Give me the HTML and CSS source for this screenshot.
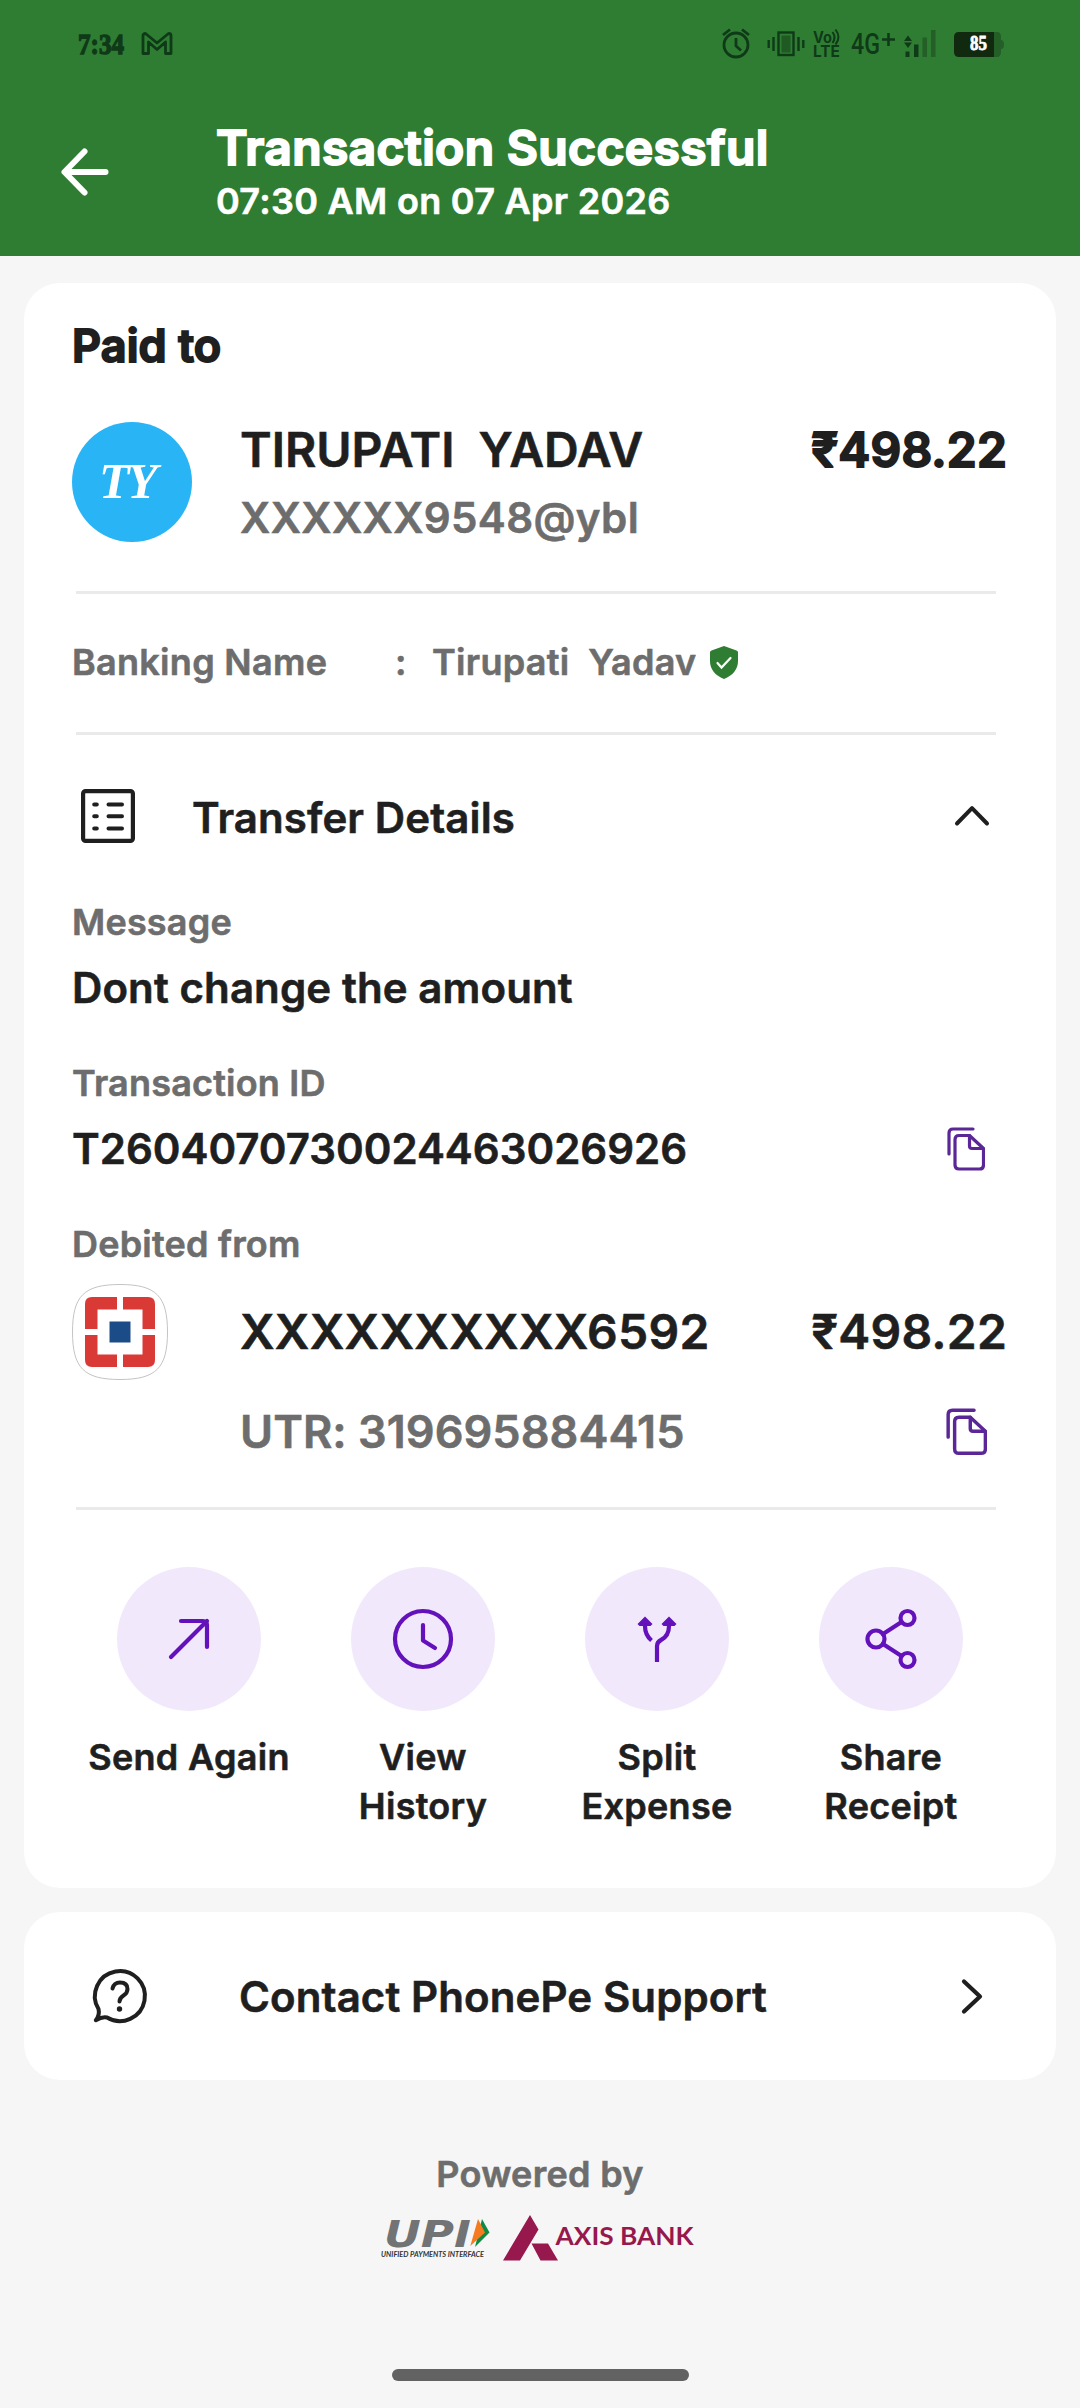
FILE: index.html
```html
<!DOCTYPE html>
<html lang="en">
<head>
<meta charset="utf-8">
<title>Transaction Successful</title>
<link rel="stylesheet" href="styles.css">
</head>
<body>
<svg class="defs" width="0" height="0" aria-hidden="true">
  <symbol id="copy" viewBox="0 0 38 44">
    <g fill="none" stroke="#5b2796" stroke-width="3.200" stroke-linecap="round" stroke-linejoin="round">
      <path d="M2 27V6q0-4 4-4h20"/>
      <path d="M22.500 8.500H12q-4 0-4 4v25.500q0 4 4 4h20.500q4 0 4-4V21.500z"/>
      <path d="M22.500 8.500V19q0 2.500 2.500 2.500h11"/>
    </g>
  </symbol>
</svg>

<header class="header">
  <div class="status">
    <div class="status-left">
      <svg class="time" width="48" height="36"><text x="0" y="27.500" textLength="46" lengthAdjust="spacingAndGlyphs">7:34</text></svg>
      <svg width="32" height="36" viewBox="0 0 32 36" fill="none" stroke="#0f3a18" stroke-width="2.800" stroke-linejoin="round"><path d="M2 27.500V9.500q0-2 2.500-2L16 17 27.500 7.500q2.500 0 2.500 2V27.500h-5.500V16L16 23.500 7.500 16V27.500z"/></svg>
    </div>
    <div class="status-right">
      <svg class="alarm" width="28" height="36" viewBox="0 0 28 36" fill="none" stroke="#0f3a18" stroke-width="2.800"><circle cx="14" cy="19" r="12"/><path d="M14 12v8l5 4.500M1 9l7-5.500M27 9l-7-5.500"/></svg>
      <svg class="vibrate" width="38" height="36" viewBox="0 0 38 36" fill="none" stroke="#0f3a18" stroke-width="2.400"><rect x="11.500" y="6.500" width="15" height="22.500"/><path fill="#1f5a22" stroke="none" d="M14.500 9.500h9v17h-9z"/><path d="M6.500 11v14M1.700 14v8M31.500 11v14M36.300 14v8"/></svg>
      <svg class="volte" width="28" height="36" viewBox="0 0 28 36"><text x="0" y="16.500" textLength="19" lengthAdjust="spacingAndGlyphs">Vo</text><text x="0" y="31" textLength="27" lengthAdjust="spacingAndGlyphs">LTE</text><path d="M19.500 6q4 5.500 0 11M22.500 3.500q6 8 0 15" fill="none" stroke="#0f3a18" stroke-width="2"/></svg>
      <svg class="net" width="46" height="36" viewBox="0 0 46 36"><text x="0" y="27.500" textLength="29" lengthAdjust="spacingAndGlyphs">4G</text><path d="M31 13.500h13M37.500 7v13" stroke="#0f3a18" stroke-width="2.600"/></svg>
      <svg class="signal" width="32" height="36" viewBox="0 0 32 36" fill="#0f3a18"><path d="M0 15l4-5.500L8 15zM0 16.500l4 5.500 4-5.500zM1.500 25.500h4V31h-4zM10 18.500h4.500V31H10z"/><path fill="#235f26" d="M18.500 11.500H23V31h-4.500zM27 4h4.500v27H27z"/></svg>
      <svg class="battery" width="50" height="36" viewBox="0 0 50 36"><path fill="#235f26" d="M40 6h3q4 0 4 5v3q3 0 3 4.500T47 23v3q0 5-4 5h-3z"/><path fill="#10290f" d="M5 6h35v25H5q-5 0-5-5V11q0-5 5-5z"/><text x="16" y="24" textLength="17" lengthAdjust="spacingAndGlyphs">85</text></svg>
    </div>
  </div>
  <div class="titlebar">
    <svg class="back" width="48" height="48" viewBox="0 0 48 48" fill="none" stroke="#fff" stroke-width="6" stroke-linecap="round" stroke-linejoin="round"><path d="M23.500 3.500L3.500 24l20 20.500M4.500 24H44.500"/></svg>
    <div>
      <h1 class="title faux">Transaction Successful</h1>
      <p class="subtitle">07:30 AM on 07 Apr 2026</p>
    </div>
  </div>
</header>

<main>
  <section class="card">
    <h2 class="paid faux">Paid to</h2>
    <div class="payee">
      <div class="avatar"><svg width="120" height="120" viewBox="0 0 120 120"><text x="27" y="76">T</text><text x="55" y="76">Y</text></svg></div>
      <div class="payee-info">
        <div class="big">TIRUPATI  YADAV</div>
        <div class="vpa">XXXXXX9548@ybl</div>
      </div>
      <div class="big amount faux">₹498.22</div>
    </div>
    <div class="rule rule-a"></div>
    <div class="banking">
      <span class="bk-label">Banking Name</span><span class="bk-colon">:</span><span>Tirupati  Yadav</span>
      <svg class="shield" width="28" height="33" viewBox="0 0 28 33"><path fill="#2e7d32" d="M14 0L26.500 4.500Q28 5 28 6.500V15c0 8-5 14.500-14 18C5 29.500 0 23 0 15V6.500Q0 5 1.500 4.500z"/><path d="M7.500 17l4 4.500 9-9.500" fill="none" stroke="#fff" stroke-width="2.200" stroke-linecap="round"/></svg>
    </div>
    <div class="rule"></div>

    <div class="details-head">
      <svg width="54" height="54" viewBox="0 0 54 54" fill="none" stroke="#1f1f1f" stroke-width="4.200"><rect x="2.100" y="2.100" width="49.800" height="49.800" rx="2.500"/><path stroke-width="4" stroke-linecap="round" d="M13.200 15.500h2.600M27.500 15.500h13.500M13.200 27.300h2.600M27.500 27.300h13.500M13.200 39.500h2.600M27.500 39.500h13.500"/></svg>
      <h3 class="mid">Transfer Details</h3>
      <svg class="up" width="36" height="22" viewBox="0 0 36 22" fill="none" stroke="#1f1f1f" stroke-width="4" stroke-linecap="round" stroke-linejoin="round"><path d="M3 18.500L18 3.200l15 15.300"/></svg>
    </div>
    <div class="label first">Message</div>
    <div class="value mid">Dont change the amount</div>
    <div class="label">Transaction ID</div>
    <div class="value mid txn"><span>T2604070730024463026926</span><svg class="copy" width="38" height="44"><use href="#copy"/></svg></div>
    <div class="label">Debited from</div>
    <div class="account">
      <svg class="bank" width="96" height="96" viewBox="0 0 96 96"><path fill="#fff" stroke="#c4c4c4" d="M48 .5C84 .5 95.500 12 95.500 48S84 95.500 48 95.500 .5 84 .5 48 12 .5 48 .5z"/><path fill="#da3a36" d="M20 13h25v12.500H25.500V45H13V20q0-7 7-7zM51 13h25q7 0 7 7v25H70.500V25.500H51zM13 51h12.500v19.500H45V83H20q-7 0-7-7zM70.500 51H83v25q0 7-7 7H51V70.500h19.500z"/><path fill="#1c4c88" d="M37.500 37.500h21v21h-21z"/></svg>
      <span class="big acct">XXXXXXXXXX6592</span>
      <span class="big amount">₹498.22</span>
    </div>
    <div class="utr"><span>UTR: 319695884415</span><svg class="copy-lg" width="41" height="47.500" viewBox="0 0 38 44"><use href="#copy"/></svg></div>
    <div class="rule"></div>

    <div class="actions">
      <div class="action"><span class="circle"><svg width="144" height="144" viewBox="0 0 144 144"><path d="M54 90L90 54M64 54h22q4 0 4 4v22"/></svg></span><span>Send Again</span></div>
      <div class="action"><span class="circle"><svg width="144" height="144" viewBox="0 0 144 144"><circle cx="72" cy="72" r="28"/><path d="M72 58v15.500l12 7.500"/></svg></span><span>View<br>History</span></div>
      <div class="action"><span class="circle"><svg width="144" height="144" viewBox="0 0 144 144"><path stroke-linecap="butt" d="M72 95V79q0-4 4-6 8-4 8-14v-3M60 56v3q0 9 6.500 14.500"/><path fill="#6311bb" stroke="none" d="M60 49.500l7.500 7.500-2 2H54.500l-2-2zM84 49.500l7.500 7.500-2 2H78.500l-2-2z"/></svg></span><span>Split<br>Expense</span></div>
      <div class="action"><span class="circle"><svg width="144" height="144" viewBox="0 0 144 144"><circle cx="57" cy="72" r="8.500"/><circle cx="88.500" cy="51" r="7"/><circle cx="88.500" cy="93" r="7"/><path d="M64 67l18.500-12M64 77l18.500 12"/></svg></span><span>Share<br>Receipt</span></div>
    </div>
  </section>

  <section class="card support">
    <svg width="54" height="54" viewBox="0 0 54 54" fill="none" stroke="#1f1f1f" stroke-width="4" stroke-linecap="round" stroke-linejoin="round"><path d="M2.800 51.200Q7 46 5.500 40A25 25 0 1 1 14 48.500Q9 47.500 2.800 51.200z"/><path d="M19.500 19.500q1.500-6 7.500-6 7.500 0 7.500 6.500 0 4-4 6.500-4 2.500-4 6"/><circle cx="26.500" cy="40" r="2.700" fill="#1f1f1f" stroke="none"/></svg>
    <span class="mid">Contact PhonePe Support</span>
    <svg class="next" width="22" height="35" viewBox="0 0 22 35" fill="none" stroke="#1f1f1f" stroke-width="4.200" stroke-linecap="round" stroke-linejoin="round"><path d="M3 2.500l16 15L3 32.500"/></svg>
  </section>

  <footer class="footer">
    <div class="powered">Powered by</div>
    <div class="logos">
      <svg class="upi" width="110" height="46" viewBox="0 0 110 46">
        <text class="upi-name" x="3" y="32" textLength="87" lengthAdjust="spacingAndGlyphs">UPI</text>
        <text class="upi-tag" x="0" y="42" textLength="103" lengthAdjust="spacingAndGlyphs">UNIFIED PAYMENTS INTERFACE</text>
        <path fill="#0f8a43" d="M101 4l7.500 13.500L94 32z"/><path fill="#f47b20" d="M97 4l7 13.500L89.300 31z"/>
      </svg>
      <svg class="axis" width="194" height="46" viewBox="0 0 194 46">
        <path fill="#97184d" d="M27 0l8.500 14.500L17 45.500H0zM28.500 28.500H45L55 45.500H37.500z"/>
        <text x="52.500" y="29.500" textLength="138" lengthAdjust="spacingAndGlyphs">AXIS BANK</text>
      </svg>
    </div>
  </footer>
</main>
<div class="homebar"></div>
</body>
</html>
```
FILE: styles.css
```css
* { box-sizing: border-box; margin: 0; padding: 0; }

body {
  width: 1080px;
  height: 2408px;
  overflow: hidden;
  display: flex;
  flex-direction: column;
  background: #f6f6f6;
  color: #1f1f1f;
  font: 600 36px/44px Inter, Roboto, sans-serif;
  letter-spacing: .3px;
  -webkit-text-stroke: .6px currentColor;
}

svg { display: block; flex: none; overflow: visible; -webkit-text-stroke: 0; }
.defs { position: absolute; }

/* Heavier cut used for headings and the main amount */
.faux { -webkit-text-stroke: 2px currentColor; }

/* Header */
.header { height: 256px; flex: none; background: #2f7d32; color: #fff; }
.status {
  height: 120px;
  padding: 26px 76px 0 78px;
  display: flex;
  justify-content: space-between;
  align-items: flex-start;
}
.status-left { display: flex; gap: 15px; }
.status-right { display: flex; }
.status svg text { fill: #0f3a18; }
.status .time text { font: 700 30px "Liberation Serif", serif; letter-spacing: 0; stroke: #0f3a18; stroke-width: 1.4px; }
.vibrate { margin-left: 17px; }
.volte { margin-left: 8px; }
.status .volte text { font: 700 15.500px Inter, sans-serif; letter-spacing: 0; }
.net { margin-left: 10px; }
.status .net text { font: 500 29px Roboto, sans-serif; letter-spacing: 0; }
.signal { margin-left: 7px; }
.battery { margin-left: 18px; }
.status .battery text { fill: #fff; font: 700 22px "Liberation Serif", serif; letter-spacing: 0; stroke: #fff; stroke-width: .8px; }

.titlebar { display: flex; align-items: flex-start; padding-left: 61px; }
.back { margin: 28px 107px 0 0; }
.title { font-size: 48px; font-weight: 600; line-height: 56px; letter-spacing: .35px; }
.subtitle { margin-top: 3px; }

/* Cards */
.card {
  margin: 27px 24px 0;
  height: 1605px;
  padding: 35px 48px 0;
  border-radius: 36px;
  background: #fff;
}
.paid { font-size: 45px; font-weight: 600; line-height: 56px; letter-spacing: .1px; }
.payee { margin-top: 48px; height: 122px; display: flex; }
.avatar { width: 120px; height: 120px; border-radius: 50%; background: #29b4f6; }
.avatar text { fill: #fff; font: italic 700 50px "Liberation Serif", serif; letter-spacing: 0; }
.payee-info { margin-left: 48px; }
.big { font-size: 48px; line-height: 56px; white-space: pre; letter-spacing: .2px; }
.payee-info .big { letter-spacing: 0; }
.vpa { margin-top: 14px; font-size: 42px; line-height: 52px; color: #6d6d6d; letter-spacing: .4px; }
.amount { margin-left: auto; margin-right: 1px; }

.rule { height: 3px; margin: 48px 12px 0 4px; background: #eaeaea; }
.rule-a { margin-top: 47px; }

.banking { margin-top: 46px; height: 44px; display: flex; align-items: center; white-space: pre; color: #6d6d6d; }
.bk-label { width: 323px; }
.bk-colon { width: 37px; }
.shield { margin-left: 13px; }

.details-head { margin-top: 54px; padding-left: 9px; height: 54px; display: flex; align-items: center; }
.mid { font-size: 42px; font-weight: 600; letter-spacing: .1px; }
.details-head h3 { margin-left: 57px; padding-top: 3px; }
.up { margin: 0 18px 0 auto; }

.label { margin-top: 47px; color: #6d6d6d; letter-spacing: .2px; }
.label.first { margin-top: 57px; }
.value { margin-top: 18px; line-height: 52px; }
.txn { display: flex; align-items: center; height: 52px; letter-spacing: 0; }
.copy { margin: 0 23px 0 auto; }

.account { margin-top: 18px; height: 96px; display: flex; align-items: center; }
.acct { margin-left: 72px; letter-spacing: .32px; }
.utr {
  margin-top: 25px;
  height: 54px;
  padding-left: 168px;
  display: flex;
  align-items: center;
  font-size: 45px;
  letter-spacing: .05px;
  color: #6d6d6d;
}
.copy-lg { margin: 0 21px 0 auto; }

.actions { margin-top: 57px; display: grid; grid-template-columns: repeat(4, 234px); }
.action { display: flex; flex-direction: column; align-items: center; gap: 22px; text-align: center; line-height: 49px; }
.circle { width: 144px; height: 144px; border-radius: 50%; background: #f2e8fc; }
.circle svg { fill: none; stroke: #6311bb; stroke-width: 4.2px; stroke-linecap: round; stroke-linejoin: round; }

.support { margin-top: 24px; height: 168px; padding: 0 69px; display: flex; align-items: center; }
.support .mid { margin: 2px 0 0 92px; }
.next { margin-left: auto; margin-right: 4px; }

/* Footer */
.footer { margin-top: 72px; display: flex; flex-direction: column; align-items: center; }
.powered { color: #6d6d6d; }
.logos { margin: 19px 3px 0 0; display: flex; gap: 12px; }
.upi-name { font: italic 700 38px "DejaVu Sans", sans-serif; letter-spacing: 0; fill: #717375; }
.upi-tag { font: italic 700 8px Lato, sans-serif; letter-spacing: 0; fill: #333; }
.axis text { font: 700 24px Lato, sans-serif; letter-spacing: 0; fill: #97184d; }

.homebar { width: 297px; height: 12px; margin: auto auto 27px; flex: none; border-radius: 6px; background: #626262; }
```
